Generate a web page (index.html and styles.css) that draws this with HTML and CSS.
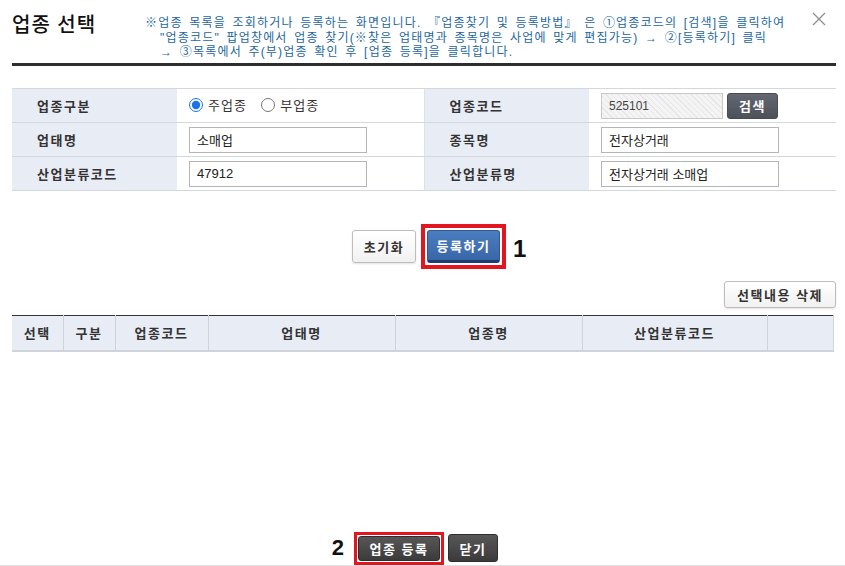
FILE: index.html
```html
<!DOCTYPE html>
<html lang="ko">
<head>
    <meta charset="UTF-8">
    <meta name="viewport" content="width=device-width, initial-scale=1.0">
    <title>업종 선택</title>
    <link rel="stylesheet" href="styles.css">
</head>
<body>
    <div class="popup">
        <div class="popup-header">
            <h1 class="popup-title">업종 선택</h1>
            <p class="guide">※업종 목록을 조회하거나 등록하는 화면입니다. 『업종찾기 및 등록방법』 은 ①업종코드의 [검색]을 클릭하여<br>"업종코드" 팝업창에서 업종 찾기(※찾은 업태명과 종목명은 사업에 맞게 편집가능) → ②[등록하기] 클릭<br>→ ③목록에서 주(부)업종 확인 후 [업종 등록]을 클릭합니다.</p>
            <button class="close" aria-label="닫기">
                <svg width="14" height="14" viewBox="0 0 14 14"><path d="M1 1L13 13M13 1L1 13" stroke="#8c8c8c" stroke-width="1.2" fill="none"/></svg>
            </button>
        </div>

        <table class="form-table">
            <colgroup>
                <col class="c-label"><col class="c-value"><col class="c-label"><col class="c-value">
            </colgroup>
            <tr>
                <th>업종구분</th>
                <td>
                    <label class="radio"><input type="radio" name="kind" checked> 주업종</label>
                    <label class="radio"><input type="radio" name="kind"> 부업종</label>
                </td>
                <th>업종코드</th>
                <td>
                    <div class="code-field">
                        <input type="text" class="input readonly" value="525101" readonly>
                        <button class="btn btn-search">검색</button>
                    </div>
                </td>
            </tr>
            <tr>
                <th>업태명</th>
                <td><input type="text" class="input" value="소매업"></td>
                <th>종목명</th>
                <td><input type="text" class="input" value="전자상거래"></td>
            </tr>
            <tr>
                <th>산업분류코드</th>
                <td><input type="text" class="input" value="47912"></td>
                <th>산업분류명</th>
                <td><input type="text" class="input" value="전자상거래 소매업"></td>
            </tr>
        </table>

        <div class="form-actions">
            <button class="btn btn-white">초기화</button>
            <span class="mark">
                <button class="btn btn-blue">등록하기</button>
                <span class="step step-right">1</span>
            </span>
        </div>

        <div class="list-tools">
            <button class="btn btn-white btn-delete">선택내용 삭제</button>
        </div>

        <div class="list-area">
            <table class="list-table">
                <colgroup>
                    <col style="width:51px"><col style="width:52px"><col style="width:93px"><col style="width:187px"><col style="width:187px"><col style="width:185px"><col>
                </colgroup>
                <thead>
                    <tr>
                        <th>선택</th>
                        <th>구분</th>
                        <th>업종코드</th>
                        <th>업태명</th>
                        <th>업종명</th>
                        <th>산업분류코드</th>
                        <th></th>
                    </tr>
                </thead>
                <tbody></tbody>
            </table>
        </div>

        <div class="popup-footer">
            <span class="mark mark-thin">
                <span class="step step-left">2</span>
                <button class="btn btn-dark btn-register">업종 등록</button>
            </span>
            <button class="btn btn-dark btn-close">닫기</button>
        </div>
    </div>
</body>
</html>
```

FILE: styles.css
```css
* {
    box-sizing: border-box;
}
body {
    margin: 0;
    background-color: #fff;
    font-family: "Liberation Sans", "Noto Sans CJK KR", sans-serif;
    color: #222;
}
.popup {
    display: flex;
    flex-direction: column;
    height: 566px;
    padding: 0 9px 0 12px;
    border-bottom: 1px solid #e2e2e2;
}

/* header */
.popup-header {
    display: flex;
    align-items: flex-start;
    height: 66px;
    border-bottom: 3px solid #2e2e2e;
}
.popup-title {
    flex: 0 0 133px;
    margin: 11px 0 0;
    font-size: 20px;
    line-height: 28px;
    font-weight: 500;
    color: #111;
    letter-spacing: 1px;
}
.guide {
    margin: 16px 0 0;
    font-size: 12px;
    line-height: 14.5px;
    color: #2467a0;
    padding-left: 15px;
    text-indent: -15px;
    letter-spacing: 1.2px;
    word-spacing: 2px;
}
.close {
    margin: 12px 10px 0 auto;
    padding: 0;
    border: none;
    background: none;
    width: 14px;
    height: 14px;
    cursor: pointer;
}
.close svg {
    display: block;
}

/* search form */
.form-table {
    width: 100%;
    margin-top: 22px;
    border-collapse: collapse;
    table-layout: fixed;
}
.form-table col.c-label {
    width: 165px;
}
.form-table col.c-value {
    width: 247px;
}
.form-table th,
.form-table td {
    height: 34px;
    padding: 0;
    border-top: 1px solid #d3d7de;
    border-bottom: 1px solid #d3d7de;
}
.form-table th {
    padding-left: 25px;
    text-align: left;
    background-color: #e8ecf5;
    font-size: 13px;
    font-weight: bold;
    color: #333;
    letter-spacing: 1.5px;
    border-left: 1px solid #dde1e8;
}
.form-table th:first-child {
    border-left: none;
}
.form-table td {
    padding-left: 12px;
}
.radio {
    display: inline-flex;
    align-items: center;
    margin-right: 10px;
    font-size: 13px;
    color: #333;
    letter-spacing: 1px;
}
.radio input {
    width: 14px;
    height: 14px;
    margin: 0 5px 0 0;
    accent-color: #1a73e8;
}
.input {
    display: block;
    width: 178px;
    height: 26px;
    padding: 0 7px;
    border: 1px solid #b5b5b5;
    font-family: inherit;
    font-size: 13px;
    color: #222;
    background-color: #fff;
}
.code-field {
    display: flex;
    align-items: center;
    gap: 4px;
}
.input.readonly {
    width: 122px;
    font-size: 12px;
    color: #444;
    border-color: #c8c8c8;
    background: repeating-linear-gradient(45deg, #f4f4f4 0 3px, #e6e6e6 3px 4px);
}

/* buttons */
.btn {
    font-family: inherit;
    font-weight: bold;
    font-size: 13px;
    letter-spacing: 1.5px;
    border-radius: 3px;
    cursor: pointer;
    padding: 0;
}
.btn-search {
    width: 51px;
    height: 26px;
    color: #fff;
    border: 1px solid #474b53;
    background: linear-gradient(#636771, #4d515a);
}
.btn-white {
    height: 33px;
    color: #333;
    border: 1px solid #bdbdbd;
    background: linear-gradient(#ffffff, #f1f1f1);
    box-shadow: 0 1px 2px rgba(0, 0, 0, 0.12);
}
.btn-blue {
    width: 73px;
    height: 33px;
    color: #fff;
    border: 1px solid #30599a;
    border-bottom: 3px solid #1f3c6c;
    background: linear-gradient(#4b7dbf, #3867a8);
}
.btn-dark {
    height: 28px;
    color: #fff;
    border: 1px solid #2e2e2e;
    background: linear-gradient(#575757, #3b3b3b);
}
.form-actions {
    display: flex;
    justify-content: center;
    align-items: center;
    gap: 5px;
    margin-top: 33px;
    padding-left: 10px;
}
.form-actions .btn-white {
    width: 64px;
}

/* red box with step number */
.mark {
    position: relative;
    display: inline-flex;
    padding: 2px;
    border: 4px solid #e3161f;
}
.mark-thin {
    padding: 1px;
    border-width: 3px;
}
.step {
    position: absolute;
    top: 50%;
    font-size: 24px;
    font-weight: bold;
    color: #111;
    line-height: 1;
}
.step-right {
    left: 100%;
    margin-left: 11px;
    transform: translateY(-40%);
}
.step-left {
    right: 100%;
    margin-right: 13px;
    transform: translateY(-50%);
    font-size: 22px;
}

/* list */
.list-tools {
    display: flex;
    justify-content: flex-end;
    margin-top: 12px;
}
.btn-delete {
    width: 112px;
    height: 27px;
}
.list-area {
    flex: 1;
    margin-top: 7px;
}
.list-table {
    width: 822px;
    border-collapse: collapse;
    table-layout: fixed;
    border-top: 1px solid #333;
}
.list-table th {
    height: 35px;
    padding: 0;
    background-color: #e8ecf5;
    border-bottom: 2px solid #cfd3da;
    border-left: 1px solid #cfd3da;
    border-right: 1px solid #cfd3da;
    font-size: 13px;
    font-weight: bold;
    color: #333;
    letter-spacing: 1.5px;
}
.list-table th:first-child {
    border-left: none;
}

/* footer */
.popup-footer {
    display: flex;
    justify-content: center;
    align-items: center;
    gap: 4px;
    height: 34px;
    padding-left: 4px;
}
.btn-register {
    width: 82px;
    height: 25px;
}
.btn-close {
    width: 50px;
}
```
